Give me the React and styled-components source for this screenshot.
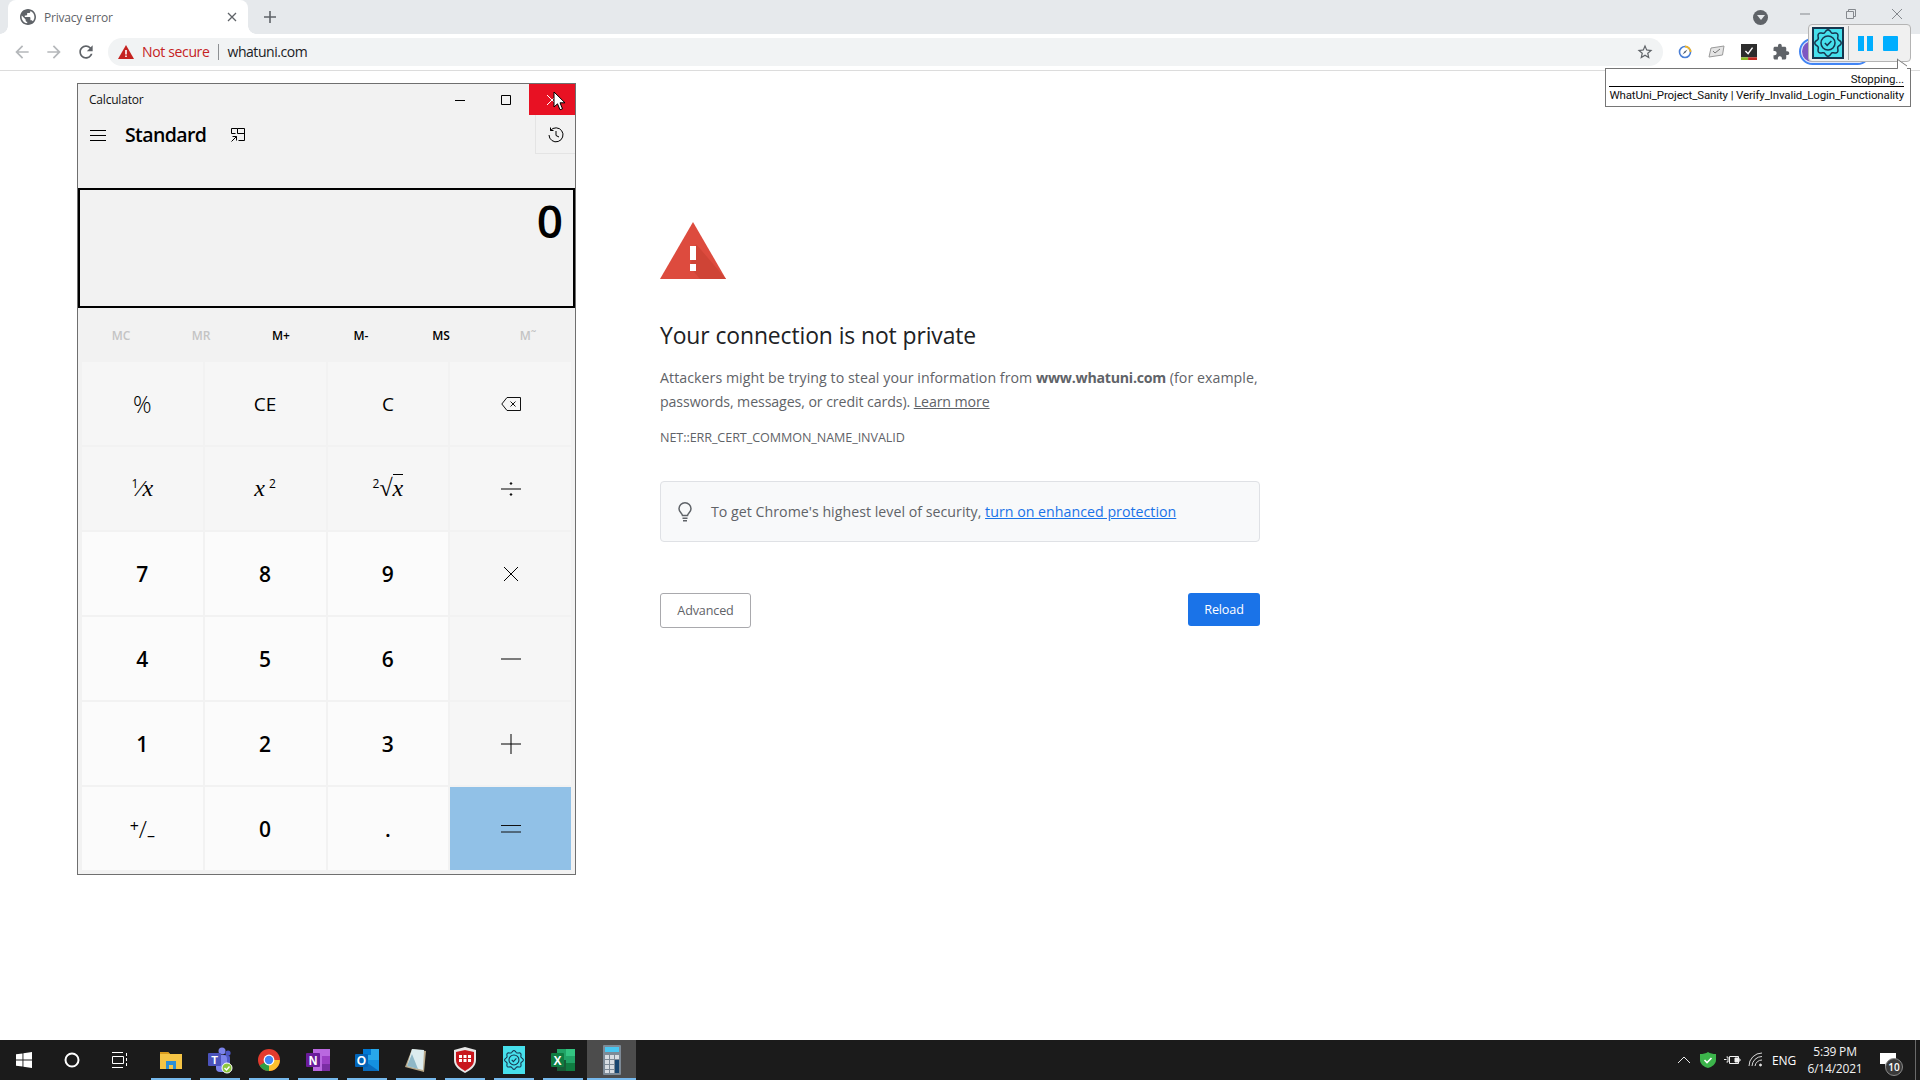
import React from 'react';
import styled, { createGlobalStyle } from 'styled-components';

const GlobalStyle = createGlobalStyle`
  html, body {
    margin: 0;
    padding: 0;
    background: #fff;
  }
  * {
    box-sizing: border-box;
  }
`;

const UI_FONT = `"Open Sans", "Noto Sans", "Liberation Sans", sans-serif`;

const Screen = styled.div`
  width: 1920px;
  height: 1080px;
  display: flex;
  flex-direction: column;
  overflow: hidden;
  position: relative;
  font-family: ${UI_FONT};
`;

/* ---------- browser chrome ---------- */

const TabStrip = styled.div`
  height: 34px;
  background: #e6e9ec;
  display: flex;
  align-items: stretch;
  padding-left: 8px;
`;

const Tab = styled.div`
  width: 240px;
  background: #fff;
  border-radius: 8px 8px 0 0;
  display: flex;
  align-items: center;
  padding: 0 10px 0 12px;
  color: #5f6368;
  font-size: 12px;
  gap: 8px;
  position: relative;
  &::before,
  &::after {
    content: '';
    position: absolute;
    bottom: 0;
    width: 8px;
    height: 8px;
  }
  &::before {
    left: -8px;
    background: radial-gradient(circle at 0 0, #e6e9ec 7.5px, #fff 8px);
  }
  &::after {
    right: -8px;
    background: radial-gradient(circle at 100% 0, #e6e9ec 7.5px, #fff 8px);
  }
`;

const TabTitle = styled.span`
  flex: 1;
  letter-spacing: -0.2px;
`;

const NewTab = styled.div`
  width: 44px;
  display: flex;
  align-items: center;
  justify-content: center;
  color: #5f6368;
`;

const Grow = styled.div`
  flex: 1;
`;

const ProfileDot = styled.div`
  width: 15px;
  height: 15px;
  border-radius: 50%;
  background: #5f6368;
  align-self: center;
  margin-right: 32px;
  display: flex;
  align-items: center;
  justify-content: center;
  &::after {
    content: '';
    border-left: 4px solid transparent;
    border-right: 4px solid transparent;
    border-top: 5px solid #e6e9ec;
    margin-top: 1px;
  }
`;

const WinControls = styled.div`
  display: flex;
  align-items: flex-start;
  padding-top: 9px;
  gap: 36px;
  padding-right: 18px;
  color: #85898e;
`;

const Toolbar = styled.div`
  height: 37px;
  background: #fff;
  border-bottom: 1px solid #dcdcdc;
  display: flex;
  align-items: center;
  padding: 0 14px 1px 12px;
`;

const NavGroup = styled.div`
  display: flex;
  gap: 12px;
  width: 96px;
`;

const NavIcon = styled.svg`
  width: 20px;
  height: 20px;
  fill: ${p => (p.$off ? '#b5b8bb' : '#5f6368')};
`;

const Omnibox = styled.div`
  width: 1555px;
  height: 28px;
  border-radius: 14px;
  background: #f1f3f4;
  display: flex;
  align-items: center;
  padding: 0 9px 0 10px;
  font-size: 14px;
`;

const NotSecure = styled.span`
  color: #c5221f;
  margin-left: 8px;
  letter-spacing: -0.35px;
`;

const OmniSep = styled.span`
  width: 1px;
  height: 16px;
  background: #8d9093;
  margin: 0 9px 0 8px;
`;

const Url = styled.span`
  color: #202124;
  flex: 1;
  letter-spacing: -0.45px;
`;

const ExtGroup = styled.div`
  display: flex;
  align-items: center;
  gap: 12px;
  margin-left: 12px;
`;

const ExtSlot = styled.div`
  width: 20px;
  height: 20px;
  display: flex;
  align-items: center;
  justify-content: center;
`;

const Avatar = styled.div`
  width: 72px;
  height: 27px;
  border-radius: 14px;
  border: 2px solid #4285f4;
  background: #dfe8fb;
  margin-left: 8px;
  display: flex;
  align-items: center;
  padding-left: 1px;
  &::before {
    content: '';
    width: 21px;
    height: 21px;
    border-radius: 50%;
    background: #7e57c2;
  }
`;

/* ---------- automation toolbar + tooltip, floating above chrome ---------- */

const FloatBar = styled.div`
  position: absolute;
  left: 1808px;
  top: 24px;
  width: 103px;
  height: 38px;
  background: #f0f0f0;
  border: 1px solid #b4b4b4;
  border-radius: 4px;
  display: flex;
  align-items: center;
  padding-left: 3px;
`;

const BotBox = styled.div`
  width: 32px;
  height: 32px;
  background: #47e0ec;
  border: 2px solid #17364f;
  display: flex;
  align-items: center;
  justify-content: center;
`;

const FloatSep = styled.div`
  width: 1px;
  height: 34px;
  background: #a9a9a9;
  margin: 0 9px 0 4px;
`;

const PauseBar = styled.div`
  width: 6px;
  height: 15px;
  background: #00aeff;
  margin-right: 3px;
`;

const StopSquare = styled.div`
  width: 15px;
  height: 15px;
  background: #00aeff;
  border-radius: 1px;
  margin-left: 7px;
`;

const Tooltip = styled.div`
  position: absolute;
  left: 1605px;
  top: 68px;
  width: 306px;
  height: 39px;
  background: #fff;
  border: 1px solid #767676;
  padding: 0 6px 0 3px;
  font-family: Roboto, "Liberation Sans", sans-serif;
  font-size: 11.5px;
  letter-spacing: -0.12px;
  line-height: 15px;
  color: #111;
  &::before {
    content: '';
    position: absolute;
    right: 3px;
    top: -7px;
    width: 9px;
    height: 9px;
    background: #fff;
    border-left: 1px solid #767676;
    border-top: 1px solid #767676;
    transform: skewY(35deg);
  }
`;

const TipTop = styled.div`
  text-align: right;
  border-bottom: 1px solid #000;
  padding: 3px 0 0;
  height: 18px;
`;

const TipBottom = styled.div`
  text-align: right;
  padding-top: 1px;
  white-space: nowrap;
`;

/* ---------- error page ---------- */

const Page = styled.div`
  flex: 1;
  position: relative;
  background: #fff;
`;

const Interstitial = styled.div`
  width: 600px;
  margin: 0 auto;
  padding-top: 151px;
  color: #5f6368;
  font-size: 14.2px;
  letter-spacing: -0.1px;
`;

const Heading = styled.h1`
  margin: 36px 0 0;
  font-weight: 400;
  font-size: 22.9px;
  line-height: 34px;
  letter-spacing: -0.1px;
  color: #202124;
`;

const Para = styled.p`
  margin: 13px 0 0;
  line-height: 24px;
`;

const FirstLine = styled.span`
  letter-spacing: 0.05px;
`;

const Strong = styled.b`
  color: #5f6368;
  letter-spacing: -0.25px;
`;

const TextLink = styled.a`
  color: ${p => (p.$blue ? '#1a73e8' : '#5f6368')};
  text-decoration: underline;
`;

const ErrCode = styled.div`
  margin-top: 13px;
  font-size: 12.6px;
  line-height: 22px;
  text-transform: uppercase;
  letter-spacing: -0.08px;
`;

const Enhanced = styled.div`
  margin-top: 32px;
  height: 61px;
  background: #f8f9fa;
  border: 1px solid #dfe1e5;
  border-radius: 4px;
  display: flex;
  align-items: center;
  padding-left: 17px;
  gap: 19px;
  letter-spacing: 0.02px;
`;

const ButtonRow = styled.div`
  margin-top: 51px;
  display: flex;
  justify-content: space-between;
  align-items: flex-start;
`;

const Button = styled.button`
  font-family: ${UI_FONT};
  font-size: 12.6px;
  letter-spacing: -0.15px;
  border-radius: 3px;
  padding: 0;
  width: ${p => (p.$primary ? '72px' : '91px')};
  height: ${p => (p.$primary ? '33px' : '35px')};
  background: ${p => (p.$primary ? '#1a73e8' : '#fff')};
  color: ${p => (p.$primary ? '#fff' : '#5f6368')};
  border: ${p => (p.$primary ? 'none' : '1px solid #a9a9ad')};
`;

/* ---------- calculator window ---------- */

const CalcWindow = styled.div`
  position: absolute;
  left: 77px;
  top: 12px;
  width: 499px;
  height: 792px;
  background: #f2f2f2;
  border: 1px solid #6f6f6f;
  display: flex;
  flex-direction: column;
  color: #000;
`;

const CalcTitleBar = styled.div`
  height: 31px;
  display: flex;
  align-items: center;
  padding-left: 11px;
  font-size: 12px;
  letter-spacing: -0.2px;
  color: #111;
`;

const CaptionBtn = styled.div`
  width: 46px;
  height: 31px;
  display: flex;
  align-items: center;
  justify-content: center;
  background: ${p => (p.$close ? '#e81123' : 'transparent')};
  color: ${p => (p.$close ? '#fff' : '#000')};
`;

const CalcHeader = styled.div`
  height: 39px;
  display: flex;
  align-items: center;
  padding-left: 12px;
`;

const ModeTitle = styled.div`
  font-size: 19.5px;
  font-weight: 600;
  letter-spacing: -0.6px;
  margin: 0 25px 0 19px;
`;

const HistoryBtn = styled.div`
  width: 40px;
  height: 39px;
  margin-left: auto;
  padding-top: 1px;
  border: 1px solid #e4e4e4;
  border-top: none;
  border-right: none;
  display: flex;
  align-items: center;
  justify-content: center;
`;

const Display = styled.div`
  margin-top: 34px;
  height: 120px;
  border: 2px solid #000;
  font-size: 46px;
  font-weight: 600;
  line-height: 60px;
  text-align: right;
  padding: 0 10px 0 0;
`;

const MemoryRow = styled.div`
  height: 54px;
  display: flex;
  align-items: center;
  padding-left: 4px;
`;

const MemBtn = styled.div`
  width: ${p => p.$w}px;
  flex-shrink: 0;
  text-align: center;
  font-size: 12px;
  font-weight: 600;
  color: ${p => (p.$off ? '#c4c4c4' : '#000')};
`;

const KeyGrid = styled.div`
  flex: 1;
  display: grid;
  grid-template-columns: repeat(4, 120.75px);
  grid-auto-rows: 83px;
  gap: 2px;
  padding: 0 4px;
`;

const Key = styled.div`
  display: flex;
  align-items: center;
  justify-content: center;
  background: ${p =>
    p.$kind === 'equals' ? '#91c1e7' : p.$kind === 'num' ? '#fbfbfb' : '#f6f6f6'};
  font-size: ${p => (p.$kind === 'num' ? '21px' : '19px')};
  font-weight: ${p => (p.$kind === 'num' ? 600 : 400)};
`;

const Percent = styled.span`
  font-size: 23px;
  font-weight: 300;
`;

const MathText = styled.span`
  font-family: "Liberation Serif", serif;
  font-style: italic;
  font-size: 24px;
  white-space: nowrap;
`;

const Sup = styled.sup`
  font-family: ${UI_FONT};
  font-style: normal;
  font-size: 12px;
  line-height: 0;
  vertical-align: 8px;
  margin-left: ${p => p.$ml || 0}px;
`;

const Over = styled.span`
  border-top: 1px solid #000;
  line-height: 18px;
`;

const SignToggle = styled.span`
  font-size: 24px;
  font-weight: 300;
  white-space: nowrap;
  line-height: 1;
`;

const SignPart = styled.span`
  display: inline-block;
  font-size: 16px;
  font-weight: 400;
  transform: translateY(${p => p.$y}px);
`;

const MouseCursor = styled.svg`
  position: absolute;
  left: 475px;
  top: 7px;
`;

/* ---------- taskbar ---------- */

const Taskbar = styled.div`
  height: 40px;
  background: #1b1b1b;
  display: flex;
  align-items: stretch;
  color: #fff;
`;

const ShellBtn = styled.div`
  width: 48px;
  display: flex;
  align-items: center;
  justify-content: center;
`;

const AppList = styled.div`
  display: flex;
  margin-left: 2px;
`;

const AppBtn = styled.div`
  width: 49px;
  display: flex;
  align-items: center;
  justify-content: center;
  position: relative;
  background: ${p => (p.$active ? '#4c4c4c' : 'transparent')};
  &::after {
    content: '';
    position: absolute;
    left: ${p => (p.$active ? 0 : 4.5)}px;
    right: ${p => (p.$active ? 0 : 4.5)}px;
    bottom: 0;
    height: 2px;
    background: #76b9ed;
  }
`;

const Tray = styled.div`
  margin-left: auto;
  display: flex;
  align-items: center;
  padding-right: 13px;
`;

const TraySlot = styled.div`
  width: ${p => p.$w || 24}px;
  display: flex;
  align-items: center;
  justify-content: center;
  font-size: 12px;
  letter-spacing: -0.2px;
`;

const Clock = styled.div`
  width: 70px;
  font-size: 12px;
  line-height: 17px;
  text-align: center;
  letter-spacing: -0.2px;
  color: #f2f2f2;
`;

const Notify = styled.div`
  width: 28px;
  height: 40px;
  margin-left: 4px;
  position: relative;
  display: flex;
  align-items: center;
  justify-content: center;
`;

const NotifyBadge = styled.div`
  position: absolute;
  right: -1px;
  bottom: 4px;
  width: 18px;
  height: 18px;
  border-radius: 50%;
  background: #3a3a3a;
  border: 1px solid #8a8a8a;
  font-size: 10px;
  font-weight: 600;
  display: flex;
  align-items: center;
  justify-content: center;
`;

const EdgeLine = styled.div`
  width: 1px;
  background: #6a6a6a;
  margin-right: 4px;
`;

/* ---------- drawings ---------- */

const Line = ({ size = 16, sw = 1, color = 'currentColor', children, view = 16 }) => (
  <svg width={size} height={size} viewBox={`0 0 ${view} ${view}`} fill="none" stroke={color} strokeWidth={sw}>
    {children}
  </svg>
);

// scalloped outline of the automation tool's badge
const GEAR =
  Array.from({ length: 96 }, (_, i) => {
    const a = (i / 96) * Math.PI * 2;
    const r = 10.2 + 1.1 * Math.cos(8 * a);
    return `${i ? 'L' : 'M'}${(12 + r * Math.cos(a)).toFixed(2)} ${(12 + r * Math.sin(a)).toFixed(2)}`;
  }).join(' ') + 'Z';

const BotIcon = ({ size }) => (
  <svg width={size} height={size} viewBox="0 0 24 24" fill="none" stroke="#17364f" strokeWidth="1.3">
    <path d={GEAR} />
    <circle cx="12" cy="12" r="6" />
    <path d="m9.3 12 2 2 3.6-3.8" />
  </svg>
);

const Globe = () => (
  <svg width="16" height="16" viewBox="2 2 20 20" fill="#5f6368">
    <path d="M12 2C6.48 2 2 6.48 2 12s4.48 10 10 10 10-4.48 10-10S17.52 2 12 2zm-1 17.93c-3.95-.49-7-3.85-7-7.93 0-.62.08-1.21.21-1.79L9 15v1c0 1.1.9 2 2 2v1.93zm6.9-2.54c-.26-.81-1-1.39-1.9-1.39h-1v-3c0-.55-.45-1-1-1H8v-2h2c.55 0 1-.45 1-1V7h2c1.1 0 2-.9 2-2v-.41c2.93 1.19 5 4.06 5 7.41 0 2.08-.8 3.97-2.1 5.39z" />
  </svg>
);

const WarnSmall = () => (
  <svg width="16" height="14" viewBox="0 0 16 14">
    <path d="M8 0 16 14H0z" fill="#c5221f" />
    <path d="M7.2 5h1.6v4.5H7.2zM7.2 10.5h1.6V12H7.2z" fill="#fff" />
  </svg>
);

const StarIcon = () => (
  <svg width="18" height="18" viewBox="0 0 24 24" fill="#5f6368">
    <path d="M22 9.24l-7.19-.62L12 2 9.19 8.63 2 9.24l5.46 4.73L5.82 21 12 17.27 18.18 21l-1.63-7.03L22 9.24zM12 15.4l-3.76 2.27 1-4.28-3.32-2.88 4.38-.38L12 6.1l1.71 4.04 4.38.38-3.32 2.88 1 4.28L12 15.4z" />
  </svg>
);

const CompassExt = () => (
  <svg width="20" height="20" viewBox="0 0 20 20" fill="none">
    <circle cx="10" cy="10" r="5.5" stroke="#4a7fd6" strokeWidth="1.6" />
    <path d="M10 4.5a5.5 5.5 0 0 1 5.5 5.5" stroke="#f0b429" strokeWidth="1.8" />
    <path d="m7.5 12.5 2-3 3-2-2 3z" fill="#4a5a70" />
  </svg>
);

const NoteExt = () => (
  <svg width="20" height="20" viewBox="0 0 20 20">
    <path d="M4 6 17 4l-1.5 9L2 15z" fill="#e4e4e4" stroke="#9a9a9a" />
    <path d="m6 9 2 2 5-4" fill="none" stroke="#777" />
  </svg>
);

const CheckExt = () => (
  <svg width="16" height="16" viewBox="0 0 18 18">
    <rect width="18" height="15" fill="#2d2d2d" />
    <rect y="15" width="8" height="3" fill="#8dbb27" />
    <rect x="8" y="15" width="10" height="3" fill="#c22a22" />
    <path d="m5 8 3 3 5-7" fill="none" stroke="#fff" strokeWidth="1.6" />
  </svg>
);

const PuzzleIcon = () => (
  <svg width="18" height="18" viewBox="0 0 24 24" fill="#5f6368">
    <path d="M20.5 11H19V7c0-1.1-.9-2-2-2h-4V3.5C13 2.12 11.88 1 10.5 1S8 2.12 8 3.5V5H4c-1.1 0-1.99.9-1.99 2v3.8H3.5c1.49 0 2.7 1.21 2.7 2.7s-1.21 2.7-2.7 2.7H2V20c0 1.1.9 2 2 2h3.8v-1.5c0-1.49 1.21-2.7 2.7-2.7 1.49 0 2.7 1.21 2.7 2.7V22H17c1.1 0 2-.9 2-2v-4h1.5c1.38 0 2.5-1.12 2.5-2.5S21.88 11 20.5 11z" />
  </svg>
);

const BigWarning = () => (
  <svg width="66" height="57" viewBox="0 0 66 57">
    <path d="M33 0 66 57H0z" fill="#dd4b3e" />
    <path d="M36 22 66 57H40L30 45z" fill="#cf4436" />
    <path d="M30 24h6v14h-6zM30 42h6v7h-6z" fill="#fff" />
  </svg>
);

const Bulb = () => (
  <svg width="14" height="20" viewBox="0 0 14 20" fill="none" stroke="#5f6368" strokeWidth="1.5">
    <path d="M4.5 13.5C4 11 1 10 1 6.8a6 6 0 0 1 12 0c0 3.2-3 4.2-3.5 6.7z" />
    <path d="M4.5 16.2h5M5 18.8h4" />
  </svg>
);

const Backspace = () => (
  <svg width="20" height="14" viewBox="0 0 20 14" fill="none" stroke="#111" strokeWidth="1">
    <path d="M19.5.5v13H6L.8 7 6 .5z" />
    <path d="m9.5 4.5 5 5M14.5 4.5l-5 5" />
  </svg>
);

const OpIcon = ({ kind }) => (
  <Line size={20} view={20} sw={1}>
    {kind === 'div' && (
      <>
        <path d="M0 10h20" />
        <circle cx="10" cy="4.5" r=".8" fill="#000" />
        <circle cx="10" cy="15.5" r=".8" fill="#000" />
      </>
    )}
    {kind === 'mul' && <path d="m3 3 14 14M17 3 3 17" />}
    {kind === 'sub' && <path d="M0 10h20" />}
    {kind === 'add' && <path d="M0 10h20M10 0v20" />}
    {kind === 'eq' && <path d="M0 6.5h20M0 13h20" stroke="#111" />}
  </Line>
);

const KEYS = [
  { id: 'pct', label: <Percent>%</Percent>, kind: 'op' },
  { id: 'ce', label: 'CE', kind: 'op' },
  { id: 'c', label: 'C', kind: 'op' },
  { id: 'back', label: <Backspace />, kind: 'op' },
  { id: 'inv', label: <MathText><Sup>1</Sup>⁄x</MathText>, kind: 'op' },
  { id: 'sq', label: <MathText>x<Sup $ml={4}>2</Sup></MathText>, kind: 'op' },
  { id: 'root', label: <MathText><Sup>2</Sup>√<Over>x</Over></MathText>, kind: 'op' },
  { id: 'div', label: <OpIcon kind="div" />, kind: 'op' },
  { id: '7', label: '7', kind: 'num' },
  { id: '8', label: '8', kind: 'num' },
  { id: '9', label: '9', kind: 'num' },
  { id: 'mul', label: <OpIcon kind="mul" />, kind: 'op' },
  { id: '4', label: '4', kind: 'num' },
  { id: '5', label: '5', kind: 'num' },
  { id: '6', label: '6', kind: 'num' },
  { id: 'sub', label: <OpIcon kind="sub" />, kind: 'op' },
  { id: '1', label: '1', kind: 'num' },
  { id: '2', label: '2', kind: 'num' },
  { id: '3', label: '3', kind: 'num' },
  { id: 'add', label: <OpIcon kind="add" />, kind: 'op' },
  { id: 'neg', label: <SignToggle><SignPart $y={-6}>+</SignPart>/<SignPart $y={3}>–</SignPart></SignToggle>, kind: 'num' },
  { id: '0', label: '0', kind: 'num' },
  { id: 'dot', label: '.', kind: 'num' },
  { id: 'eq', label: <OpIcon kind="eq" />, kind: 'equals' }
];

const MEMORY = [
  { label: 'MC', w: 78, off: true },
  { label: 'MR', w: 82, off: true },
  { label: 'M+', w: 78, off: false },
  { label: 'M-', w: 82, off: false },
  { label: 'MS', w: 78, off: false },
  { label: 'M˜', w: 96, off: true }
];

const FolderIcon = () => (
  <svg width="24" height="24" viewBox="0 0 24 24">
    <path d="M1 4h8l2 2h12v15H1z" fill="#f5c445" />
    <path d="M1 4h8l2 2H1z" fill="#d99b1c" />
    <rect x="7" y="13" width="10" height="8" fill="#2d8fd6" />
    <rect x="10" y="17" width="4" height="4" fill="#f5c445" />
  </svg>
);

const TeamsIcon = () => (
  <svg width="28" height="28" viewBox="0 0 28 28">
    <circle cx="16" cy="5" r="3.5" fill="#7b83eb" />
    <circle cx="22" cy="7" r="2.6" fill="#5059c9" />
    <rect x="14" y="9" width="10" height="14" rx="3" fill="#5059c9" />
    <rect x="10" y="9" width="11" height="17" rx="4" fill="#7b83eb" />
    <rect x="2" y="7" width="13" height="13" rx="1" fill="#4b53bc" />
    <text x="8.5" y="17.5" fontSize="11" fontWeight="700" fontFamily="Liberation Sans" textAnchor="middle" fill="#fff">T</text>
    <circle cx="21" cy="22" r="5" fill="#8cc63f" stroke="#fff" />
    <path d="m18.5 22 2 2 3-3.5" fill="none" stroke="#fff" strokeWidth="1.4" />
  </svg>
);

const ChromeIcon = () => (
  <svg width="24" height="24" viewBox="0 0 24 24">
    <circle cx="12" cy="12" r="11" fill="#e33b2e" />
    <path d="M12 12 2.5 17.5A11 11 0 0 0 12 23l5.5-9z" fill="#2f9e44" />
    <path d="M12 12h10.9A11 11 0 0 1 12 23z" fill="#fbc02d" />
    <circle cx="12" cy="12" r="5.4" fill="#fff" />
    <circle cx="12" cy="12" r="4.2" fill="#4285f4" />
  </svg>
);

const OneNoteIcon = () => (
  <svg width="24" height="24" viewBox="0 0 24 24">
    <rect x="7" y="1" width="17" height="22" fill="#ba68e0" />
    <rect x="16" y="8" width="8" height="8" fill="#9c3fc4" />
    <rect x="16" y="16" width="8" height="7" fill="#7a2da3" />
    <rect x="0" y="5" width="14" height="14" rx="1" fill="#6a1b9a" />
    <text x="7" y="16.5" fontSize="12" fontWeight="700" fontFamily="Liberation Sans" textAnchor="middle" fill="#fff">N</text>
  </svg>
);

const OutlookIcon = () => (
  <svg width="24" height="24" viewBox="0 0 24 24">
    <rect x="8" y="1" width="16" height="12" fill="#28a8ea" />
    <rect x="8" y="1" width="8" height="6" fill="#0078d4" />
    <path d="M8 12h16v11H8z" fill="#0a6cbd" />
    <path d="m8 12 16 11V12z" fill="#1490df" />
    <rect x="0" y="6" width="13" height="13" rx="1" fill="#0364b8" />
    <text x="6.5" y="16.8" fontSize="12" fontWeight="700" fontFamily="Liberation Sans" textAnchor="middle" fill="#fff">O</text>
  </svg>
);

const NotesIcon = () => (
  <svg width="24" height="24" viewBox="0 0 24 24">
    <path d="M8 1 22 3l-2 21L1 19z" fill="#b9a98a" />
    <path d="M8 1 20 2l-1 20L3 18z" fill="#dcecef" />
    <path d="M3 18 8 6l6 15z" fill="#8fb8c7" />
  </svg>
);

const ShieldIcon = () => (
  <svg width="22" height="26" viewBox="0 0 22 26">
    <path d="M11 0 22 3v10c0 6-5 10-11 13C5 23 0 19 0 13V3z" fill="#e8e8e8" />
    <path d="M11 3 20 5v8c0 5-4 8-9 11C6 21 2 18 2 13V5z" fill="#c8161d" />
    <g fill="#fff">
      <rect x="5" y="8" width="3" height="3" />
      <rect x="9.5" y="8" width="3" height="3" />
      <rect x="14" y="8" width="3" height="3" />
      <rect x="5" y="12" width="3" height="3" />
      <rect x="9.5" y="12" width="3" height="3" />
      <rect x="14" y="12" width="3" height="3" />
    </g>
  </svg>
);

const BotTile = () => (
  <svg width="22" height="28" viewBox="0 0 22 28">
    <rect width="22" height="28" fill="#47e0ec" />
    <g transform="translate(1 4) scale(.83)" fill="none" stroke="#17364f" strokeWidth="1.3">
      <path d={GEAR} />
      <circle cx="12" cy="12" r="6" />
      <path d="m9.3 12 2 2 3.6-3.8" />
    </g>
  </svg>
);

const ExcelIcon = () => (
  <svg width="24" height="24" viewBox="0 0 24 24">
    <rect x="6" y="1" width="18" height="22" fill="#21a366" />
    <rect x="15" y="1" width="9" height="7" fill="#33c481" />
    <rect x="6" y="12" width="9" height="11" fill="#185c37" />
    <rect x="15" y="15" width="9" height="8" fill="#107c41" />
    <rect x="0" y="5" width="13" height="14" rx="1" fill="#107c41" />
    <text x="6.5" y="16.5" fontSize="12" fontWeight="700" fontFamily="Liberation Sans" textAnchor="middle" fill="#fff">X</text>
  </svg>
);

const CalcIcon = () => (
  <svg width="18" height="30" viewBox="0 0 18 30">
    <rect width="18" height="30" rx="1" fill="#7d8a96" />
    <rect x="2" y="2" width="14" height="5" fill="#49c6f1" />
    <g fill="#d8dde2">
      <rect x="2" y="10" width="4" height="4" />
      <rect x="7" y="10" width="4" height="4" />
      <rect x="12" y="10" width="4" height="4" />
      <rect x="2" y="15" width="4" height="4" />
      <rect x="7" y="15" width="4" height="4" />
      <rect x="2" y="20" width="4" height="4" />
      <rect x="7" y="20" width="4" height="4" />
      <rect x="2" y="25" width="4" height="3" />
      <rect x="7" y="25" width="4" height="3" />
    </g>
    <rect x="12" y="15" width="4" height="13" fill="#17456f" />
  </svg>
);

const APPS = [
  { id: 'files', icon: <FolderIcon /> },
  { id: 'teams', icon: <TeamsIcon /> },
  { id: 'chrome', icon: <ChromeIcon /> },
  { id: 'onenote', icon: <OneNoteIcon /> },
  { id: 'outlook', icon: <OutlookIcon /> },
  { id: 'notes', icon: <NotesIcon /> },
  { id: 'shield', icon: <ShieldIcon /> },
  { id: 'bot', icon: <BotTile /> },
  { id: 'excel', icon: <ExcelIcon /> },
  { id: 'calc', icon: <CalcIcon />, active: true }
];

const App = () => {
  return (
    <Screen>
      <GlobalStyle />
      <TabStrip>
        <Tab>
          <Globe />
          <TabTitle>Privacy error</TabTitle>
          <Line size={12} view={12} sw={1.3}>
            <path d="m2 2 8 8M10 2l-8 8" />
          </Line>
        </Tab>
        <NewTab>
          <Line size={14} view={14} sw={1.6}>
            <path d="M7 1v12M1 7h12" />
          </Line>
        </NewTab>
        <Grow />
        <ProfileDot />
        <WinControls>
          <Line size={10} view={10}>
            <path d="M0 5h10" />
          </Line>
          <Line size={10} view={10}>
            <path d="M.5 2.5h7v7h-7zM2.5 2.5v-2h7v7h-2" />
          </Line>
          <Line size={10} view={10}>
            <path d="m0 0 10 10M10 0 0 10" />
          </Line>
        </WinControls>
      </TabStrip>

      <Toolbar>
        <NavGroup>
          <NavIcon $off viewBox="0 0 24 24">
            <path d="M20 11H7.83l5.59-5.59L12 4l-8 8 8 8 1.41-1.41L7.83 13H20v-2z" />
          </NavIcon>
          <NavIcon $off viewBox="0 0 24 24">
            <path d="M12 4l-1.41 1.41L16.17 11H4v2h12.17l-5.58 5.59L12 20l8-8z" />
          </NavIcon>
          <NavIcon viewBox="0 0 24 24">
            <path d="M17.65 6.35C16.2 4.9 14.21 4 12 4c-4.42 0-7.99 3.58-7.99 8s3.57 8 7.99 8c3.73 0 6.84-2.55 7.73-6h-2.08c-.82 2.33-3.04 4-5.65 4-3.31 0-6-2.69-6-6s2.69-6 6-6c1.66 0 3.14.69 4.22 1.78L13 11h7V4l-2.35 2.35z" />
          </NavIcon>
        </NavGroup>
        <Omnibox>
          <WarnSmall />
          <NotSecure>Not secure</NotSecure>
          <OmniSep />
          <Url>whatuni.com</Url>
          <StarIcon />
        </Omnibox>
        <ExtGroup>
          <ExtSlot><CompassExt /></ExtSlot>
          <ExtSlot><NoteExt /></ExtSlot>
          <ExtSlot><CheckExt /></ExtSlot>
          <ExtSlot><PuzzleIcon /></ExtSlot>
        </ExtGroup>
        <Avatar />
      </Toolbar>

      <Page>
        <Interstitial>
          <BigWarning />
          <Heading>Your connection is not private</Heading>
          <Para>
            <FirstLine>Attackers might be trying to steal your information from </FirstLine>
            <Strong>www.whatuni.com</Strong>
            <FirstLine> (for example, </FirstLine>
            passwords, messages, or credit cards). <TextLink>Learn more</TextLink>
          </Para>
          <ErrCode>NET::ERR_CERT_COMMON_NAME_INVALID</ErrCode>
          <Enhanced>
            <Bulb />
            <span>
              To get Chrome's highest level of security, <TextLink $blue>turn on enhanced protection</TextLink>
            </span>
          </Enhanced>
          <ButtonRow>
            <Button>Advanced</Button>
            <Button $primary>Reload</Button>
          </ButtonRow>
        </Interstitial>

        <CalcWindow>
          <CalcTitleBar>
            <Grow>Calculator</Grow>
            <CaptionBtn>
              <Line size={10} view={10}>
                <path d="M0 5.5h10" />
              </Line>
            </CaptionBtn>
            <CaptionBtn>
              <Line size={10} view={10}>
                <path d="M.5.5h9v9h-9z" />
              </Line>
            </CaptionBtn>
            <CaptionBtn $close>
              <Line size={10} view={10}>
                <path d="m0 0 10 10M10 0 0 10" />
              </Line>
            </CaptionBtn>
          </CalcTitleBar>
          <CalcHeader>
            <Line size={16} view={16}>
              <path d="M0 3.5h16M0 8.5h16M0 13.5h16" />
            </Line>
            <ModeTitle>Standard</ModeTitle>
            <Line size={14} view={14}>
              <path d="M6.5 5.5V.5h7v12h-6M13.5 5.5h-7M.5 5.5h4M.5 5.5v-5h6" />
              <path d="m.5 13.5 5-5M1.5 8.5h4v4" />
            </Line>
            <HistoryBtn>
              <Line size={16} view={16}>
                <path d="M2.5 3.5A7 7 0 1 1 1 8M2.5.5v3h3" />
                <path d="M8 4v4.5l3 1.5" />
              </Line>
            </HistoryBtn>
          </CalcHeader>
          <Display>0</Display>
          <MemoryRow>
            {MEMORY.map(m => (
              <MemBtn key={m.label} $w={m.w} $off={m.off}>
                {m.label}
              </MemBtn>
            ))}
          </MemoryRow>
          <KeyGrid>
            {KEYS.map(k => (
              <Key key={k.id} $kind={k.kind}>
                {k.label}
              </Key>
            ))}
          </KeyGrid>
          <MouseCursor width="13" height="20" viewBox="0 0 13 20">
            <path d="M1 1v15l3.5-3.2 2.5 6 2.5-1-2.5-6H12z" fill="#fff" stroke="#000" />
          </MouseCursor>
        </CalcWindow>
      </Page>

      <Taskbar>
        <ShellBtn>
          <svg width="16" height="16" viewBox="0 0 16 16" fill="#fff">
            <path d="M0 2.3 6.5 1.4v6.2H0zM7.4 1.3 16 0v7.6H7.4zM0 8.4h6.5v6.2L0 13.7zM7.4 8.4H16V16l-8.6-1.2z" />
          </svg>
        </ShellBtn>
        <ShellBtn>
          <Line size={16} view={16} sw={2} color="#fff">
            <circle cx="8" cy="8" r="6.5" />
          </Line>
        </ShellBtn>
        <ShellBtn>
          <Line size={16} view={16} color="#fff">
            <path d="M0 .5h11M0 15.5h11M.5 4.5h11v7H.5zM14.5 1v3M14.5 6v3M14.5 11v3" />
          </Line>
        </ShellBtn>
        <AppList>
          {APPS.map(a => (
            <AppBtn key={a.id} $active={a.active}>
              {a.icon}
            </AppBtn>
          ))}
        </AppList>
        <Tray>
          <TraySlot>
            <Line size={14} view={14} color="#e8e8e8">
              <path d="m1 10 6-6 6 6" />
            </Line>
          </TraySlot>
          <TraySlot>
            <svg width="16" height="16" viewBox="0 0 16 16">
              <path d="M8 0c2 1.5 5 2 8 2v6c0 4-4 7-8 8-4-1-8-4-8-8V2c3 0 6-.5 8-2z" fill="#3cb44b" />
              <path d="m4.5 8 2.5 2.5 4.5-4.5" fill="none" stroke="#fff" strokeWidth="1.6" />
            </svg>
          </TraySlot>
          <TraySlot>
            <Line size={18} view={18} color="#f2f2f2">
              <path d="M6.5 5.5h9v7h-9zM15.5 8h1.5v2h-1.5M1 8.5h2.5M3.5 6h1.5v5H3.5M1 2.5" />
              <path d="M12 7h3v4h-3z" fill="#f2f2f2" />
            </Line>
          </TraySlot>
          <TraySlot>
            <Line size={16} view={16} color="#d8d8d8">
              <path d="M1 14A13 13 0 0 1 14 1M4 14A10 10 0 0 1 14 4.5M7 14a7 7 0 0 1 7-6" />
              <circle cx="12.5" cy="13" r="1" fill="#fff" />
            </Line>
          </TraySlot>
          <TraySlot $w={32}>ENG</TraySlot>
          <Clock>
            5:39 PM
            <br />
            6/14/2021
          </Clock>
          <Notify>
            <svg width="16" height="15" viewBox="0 0 16 15" fill="#fff">
              <path d="M0 0h16v11H8l-3 3v-3H0z" />
            </svg>
            <NotifyBadge>10</NotifyBadge>
          </Notify>
        </Tray>
        <EdgeLine />
      </Taskbar>

      <FloatBar>
        <BotBox>
          <BotIcon size={28} />
        </BotBox>
        <FloatSep />
        <PauseBar />
        <PauseBar />
        <StopSquare />
      </FloatBar>
      <Tooltip>
        <TipTop>Stopping...</TipTop>
        <TipBottom>WhatUni_Project_Sanity | Verify_Invalid_Login_Functionality</TipBottom>
      </Tooltip>
    </Screen>
  );
};

export default App;
